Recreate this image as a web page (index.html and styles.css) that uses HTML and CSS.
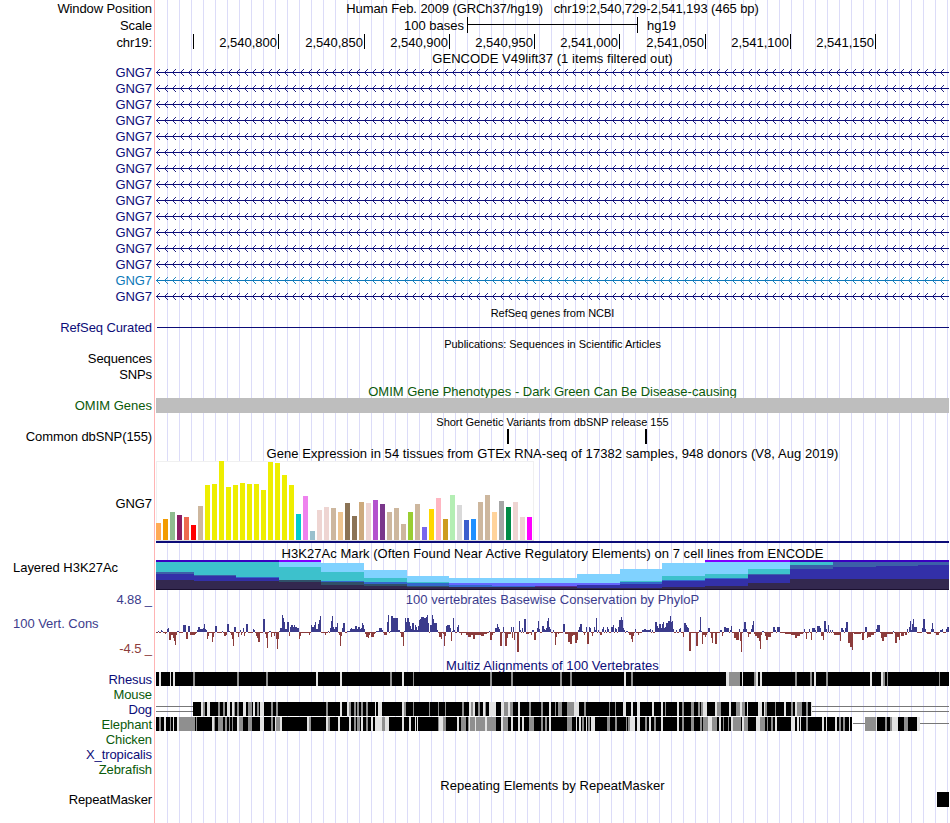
FILE: index.html
```
<!DOCTYPE html>
<html>

	<head>
		<meta charset="UTF-8">
		<title>UCSC Genome Browser</title>
		<link rel="stylesheet" href="styles.css">
	</head>

	<body>
		<div id="browser">
			<div class="row h17">
				<span class="label">Window Position</span>
				<p class="title position">Human Feb. 2009 (GRCh37/hg19) &nbsp; chr19:2,540,729-2,541,193 (465 bp)</p>
			</div>
			<div class="row h17">
				<span class="label">Scale</span>
				<div class="scale"><span>100 bases</span><i></i><span>hg19</span></div>
			</div>
			<div class="row h17">
				<span class="label">chr19:</span>
				<div class="ruler" id="ruler"></div>
			</div>
			<div class="row h14">
				<span></span>
				<p class="title">GENCODE V49lift37 (1 items filtered out)</p>
			</div>
			<div id="genes"></div>

			<div class="row h14 refseq-title">
				<span></span>
				<p class="title small">RefSeq genes from NCBI</p>
			</div>
			<div class="row h15 navy">
				<span class="label">RefSeq Curated</span>
				<svg width="793" height="15" viewBox="156 0 793 15"><rect x="157" y="7" width="792" height="1" fill="#0c0c78" /></svg>
			</div>
			<div class="row h16">
				<span></span>
				<p class="title small low">Publications: Sequences in Scientific Articles</p>
			</div>
			<div class="row h16"><span class="label">Sequences</span></div>
			<div class="row h16"><span class="label">SNPs</span></div>
			<div class="row h15 green">
				<span></span>
				<p class="title omim low">OMIM Gene Phenotypes - Dark Green Can Be Disease-causing</p>
			</div>
			<div class="row h15 green">
				<span class="label omim">OMIM Genes</span>
				<div class="omim-bar"></div>
			</div>
			<div class="row h16">
				<span></span>
				<p class="title small low">Short Genetic Variants from dbSNP release 155</p>
			</div>
			<div class="row h15">
				<span class="label">Common dbSNP(155)</span>
				<svg width="793" height="15" viewBox="156 0 793 15">
					<rect x="507" y="0" width="2" height="15" />
					<rect x="645" y="0" width="2" height="15" />
				</svg>
			</div>
			<div class="row h17">
				<span></span>
				<p class="title low">Gene Expression in 54 tissues from GTEx RNA-seq of 17382 samples, 948 donors (V8, Aug 2019)</p>
			</div>
			<div class="row h84">
				<span class="label">GNG7</span>
				<svg id="gtex" width="793" height="84" viewBox="156 461 793 84"></svg>
			</div>
			<div class="row h15">
				<span></span>
				<p class="title low">H3K27Ac Mark (Often Found Near Active Regulatory Elements) on 7 cell lines from ENCODE</p>
			</div>
			<div class="row h32">
				<span class="label left h3k-label">Layered H3K27Ac</span>
				<svg id="h3k" width="793" height="32" viewBox="156 560 793 32"></svg>
			</div>
			<div class="row h15 blue">
				<span class="label">4.88 _</span>
				<p class="title cons-title">100 vertebrates Basewise Conservation by PhyloP</p>
			</div>
			<div class="row h51 blue">
				<div class="cons-label">
					<span class="label left">100 Vert. Cons</span>
					<span class="label red">-4.5 _</span>
				</div>
				<svg id="cons" width="793" height="51" viewBox="156 607 793 51"></svg>
			</div>
			<div class="row h14 navy">
				<span></span>
				<p class="title">Multiz Alignments of 100 Vertebrates</p>
			</div>
			<div class="row h15 navy"><span class="label">Rhesus</span><svg id="rhesus" width="793" height="15" viewBox="156 0 793 15"></svg></div>
			<div class="row h15 green"><span class="label">Mouse</span></div>
			<div class="row h15 navy"><span class="label">Dog</span><svg id="dog" width="793" height="15" viewBox="156 0 793 15"></svg></div>
			<div class="row h15 green"><span class="label">Elephant</span><svg id="elephant" width="793" height="15" viewBox="156 0 793 15"></svg></div>
			<div class="row h15 green"><span class="label">Chicken</span></div>
			<div class="row h15 navy"><span class="label">X_tropicalis</span></div>
			<div class="row h15 green"><span class="label">Zebrafish</span></div>
			<div class="row h15">
				<span></span>
				<p class="title low">Repeating Elements by RepeatMasker</p>
			</div>
			<div class="row h15">
				<span class="label">RepeatMasker</span>
				<svg width="793" height="15" viewBox="156 0 793 15"><rect x="937" y="0" width="12" height="15" /></svg>
			</div>
		</div>
		<script src="tracks.js" type="text/javascript" charset="utf-8"></script>
	</body>

</html>
```
FILE: styles.css
```
* {
	margin: 0;
	padding: 0;
	box-sizing: border-box;
}

body {
	width: 949px;
	background: #fff;
	font-family: "Liberation Sans", Arial, sans-serif;
	font-size: 13px;
	color: #000;
}

#browser {
	height: 823px;
	overflow: hidden;
	background:
		linear-gradient(90deg, #fff 154px, #ffb4b4 154px, #ffb4b4 155px, #fff 155px, #fff 156px, transparent 156px),
		linear-gradient(90deg, #dcdcf8 1px, transparent 1px) 167px 0 / 12px 100%;
}

.row {
	display: grid;
	grid-template-columns: 152px 793px;
	column-gap: 4px;
	align-items: center;
	white-space: nowrap;
}

.h14 { height: 14px; }
.h15 { height: 15px; }
.h16 { height: 16px; }
.h17 { height: 17px; }
.h32 { height: 32px; }
.h51 { height: 51px; }
.h84 { height: 84px; }

.label {
	text-align: right;
	line-height: 15px;
	letter-spacing: -0.1px;
}

.h16 .label {
	align-self: start;
}

.left {
	text-align: left;
	padding-left: 13px;
	letter-spacing: -0.03px;
}

.title {
	text-align: center;
	font-weight: normal;
	line-height: 15px;
	letter-spacing: 0.05px;
}

.low {
	padding-top: 2px;
}

.h15 .low {
	padding-top: 1px;
}

.position {
	letter-spacing: -0.09px;
}

.cons-title {
	letter-spacing: 0.03px;
}

.omim {
	letter-spacing: 0;
}

.small {
	font-size: 11px;
	letter-spacing: -0.02px;
}

svg {
	display: block;
	shape-rendering: crispEdges;
}

.navy { color: #0c0c78; }
.green { color: #0a5a0a; }
.blue { color: #3c3c8c; }
.red { color: #8c3c3c; }
.alt { color: #0c78b8; }

.scale {
	display: flex;
	align-items: center;
	height: 17px;
	padding-left: 248px;
}

.scale i {
	align-self: flex-start;
	width: 171px;
	height: 16px;
	margin: 0 9px 0 3px;
	border: solid #000;
	border-width: 0 1px;
	background: linear-gradient(#000, #000) 0 7px / 100% 1px no-repeat;
}

.ruler {
	display: flex;
	align-items: flex-start;
	height: 17px;
}

.ruler span {
	height: 15px;
	line-height: 17px;
	text-align: right;
	padding-right: 1px;
	border-right: 1px solid #000;
}

.refseq-title {
	margin-top: 1px;
}

.omim-bar {
	height: 15px;
	background: #bebebe;
}

.h3k-label {
	align-self: start;
}

.cons-label {
	display: flex;
	flex-direction: column;
	justify-content: space-between;
	height: 51px;
	padding: 9px 0 2px;
}
```
FILE: tracks.js
```
var NS = "http://www.w3.org/2000/svg";

function rect(svg, x, y, w, h, fill) {
	var r = document.createElementNS(NS, "rect");
	r.setAttribute("x", x);
	r.setAttribute("y", y);
	r.setAttribute("width", w);
	r.setAttribute("height", h);
	r.setAttribute("fill", fill);
	svg.appendChild(r);
}

function get(id) {
	return document.getElementById(id);
}

// ruler ticks
var ticks = [[193, ""], [278, "2,540,800"], [364, "2,540,850"], [449, "2,540,900"], [534, "2,540,950"],
	[619, "2,541,000"], [705, "2,541,050"], [790, "2,541,100"], [875, "2,541,150"]];
var prev = 156;
ticks.forEach(function(t) {
	var s = document.createElement("span");
	s.style.width = (t[0] + 1 - prev) + "px";
	s.textContent = t[1];
	get("ruler").appendChild(s);
	prev = t[0] + 1;
});

// gene rows, all on the minus strand
var arrows = "";
for(var x = 156; x < 946; x += 8) {
	arrows += "M" + (x + 4) + " 4L" + (x + 0.5) + " 7.5L" + (x + 4) + " 11";
}
for(var i = 0; i < 15; i++) {
	var alt = i == 13;
	var color = alt ? "#0c78b8" : "#0c0c78";
	var row = document.createElement("div");
	row.className = "row h16 " + (alt ? "alt" : "navy");
	row.innerHTML = '<span class="label">GNG7</span><svg width="793" height="16" viewBox="156 0 793 16">' +
		'<rect x="156" y="7" width="793" height="1" fill="' + color + '"/>' +
		'<path shape-rendering="auto" fill="none" stroke-width="0.9" stroke="' + color + '" d="' + arrows + '"/></svg>';
	get("genes").appendChild(row);
}

// GTEx
var tan = "#cdb79e", pink = "#eed5d2", yellow = "#eeee00";
var gtex = [[17, "#ffaa55"], [21, "#f29b00"], [28, "#8fbc8f"], [25, "#8b1c62"], [23, "#ee6a50"], [15, "#ff0000"], [34, tan],
	[55, yellow], [56, yellow], [79, yellow], [53, yellow], [55, yellow], [57, yellow], [56, yellow], [56, yellow],
	[50, yellow], [78, yellow], [77, yellow], [65, yellow], [55, yellow],
	[26, "#00cdcd"], [44, "#ee82ee"], [9, "#9ac0cd"], [30, pink], [33, pink], [32, tan], [28, "#eec591"], [37, "#8b7355"],
	[24, "#8b7355"], [38, "#cdaa7d"], [37, pink], [40, "#b452cd"], [36, "#7a378b"], [28, tan], [32, tan], [16, tan],
	[28, "#9acd32"], [36, tan], [13, "#7a67ee"], [31, "#ffd700"], [42, "#ffb6c1"], [21, "#cd9b1d"], [45, "#b4eeb4"],
	[35, "#d9d9d9"], [20, "#3a5fcd"], [21, "#1e90ff"], [38, tan], [45, tan], [28, "#ffd39b"], [39, "#a6a6a6"],
	[33, "#008b45"], [38, pink], [23, pink], [23, "#ff00ff"]];
rect(get("gtex"), 156, 461, 378, 80, "#f0f0f0");
rect(get("gtex"), 157, 462, 376, 78, "#ffffff");
rect(get("gtex"), 156, 540, 378, 1, "#dcdcdc");
gtex.forEach(function(b, i) {
	rect(get("gtex"), 156 + i * 7, 540 - b[0], 5, b[0], b[1]);
});
rect(get("gtex"), 156, 541, 793, 2, "#0c0c78");

// H3K27Ac: [x, top, colour, top, colour ...], every layer runs down to the next one
var L = "#80d2ff", T = "#3dc1cc", B = "#3367cc", N = "#3330a8", D = "#33284f", S = "#3c60a8", G = "#305068",
	V = "#6666ff", P = "#3a00c0", Q = "#8000ff";
var h3k = [
	[156, 560, P, 562, T, 572, S, 574, N, 580, D],
	[194, 560, P, 562, T, 575, S, 576, N, 581, D],
	[236, 560, P, 562, T, 577, B, 578, N, 581, D],
	[279, 560, Q, 562, L, 567, T, 580, G, 582, D],
	[321, 563, L, 572, T, 581, B, 582, G, 585, D],
	[364, 570, L, 578, T, 582, B, 584, G, 586, D],
	[407, 576, L, 582, T, 583, B, 586, G, 587, D],
	[449, 578, L, 583, V, 585, B, 587, D],
	[492, 578, L, 583, V, 586, B, 587, D],
	[535, 578, L, 583, V, 586, "#5a2890", 587, D],
	[577, 574, L, 583, V, 585, N, 588, D],
	[620, 569, L, 581, T, 582, B, 584, N, 588, D],
	[662, 563, L, 576, T, 580, B, 581, N, 587, D],
	[705, 560, Q, 562, L, 574, T, 578, B, 579, N, 586, D],
	[748, 560, Q, 562, L, 569, T, 574, S, 575, N, 583, D],
	[790, 560, P, 562, T, 565, S, 569, N, 579, D],
	[833, 560, P, 562, S, 567, N, 579, D],
	[876, 560, P, 562, S, 566, N, 579, D],
	[918, 560, P, 562, S, 565, N, 579, D]
];
h3k.forEach(function(c, i) {
	var end = i + 1 < h3k.length ? h3k[i + 1][0] : 949;
	for(var k = 1; k < c.length; k += 2) {
		rect(get("h3k"), c[0], c[k], end - c[0], 590 - c[k], c[k + 1]);
	}
});
rect(get("h3k"), 156, 589, 793, 1, "#1a1030");

// PhyloP: "x value" or "x-end value", pixels above or below the axis
var cons = "158 1,161 2,162 1,165 -2,167 3,168 4,169-170 -8,171-172 -3,173 -6,174 -9,175 -13,176 -3,177 1,178 1,183-185 7,186-187 -7,188-189 6," +
	"190-194 -3,195 -2,197 2,198-199 5,200-202 3,203 4,204 8,205 3,206 2,207 -7,208 -4,212 -10,213 -5,215-216 6,222 1,224-225 -4,226 -3," +
	"227-228 8,229 1,231 -3,232 -7,233 -14,234-235 5,238 -5,240 2,241 -3,243 4,244 -4,246-247 8,253 3,254 2,256 -4,257 -6,258-259 -10," +
	"263-264 13,265 -2,266 -6,267 -16,269-270 1,271 -5,274 -4,276 -7,277 -17,278 -7,279 1,280-281 4,282 17,283 14,284 10,285-286 3,287-288 10," +
	"289 -4,290 5,291-292 7,293 5,294 7,295-296 5,297-298 4,299 -7,300 -4,309 -3,311 7,312-313 5,314 7,315 10,316-317 3,318 8,319 12,320 16," +
	"325 -3,328 1,330 4,331 11,332 16,333 5,334 3,335-336 5,337 9,339 -3,340 -14,341 -4,342 4,343-344 9,347-349 1,350 3,351 4,352-354 3," +
	"355-356 6,357 3,358-359 5,360 3,361 4,362 9,363 7,364 3,365 -2,366-367 -5,368 -6,369 -3,371-373 -5,374 -2,376-378 1,379-381 4,382 2," +
	"384-386 -3,387 10,388 17,390 1,391-392 16,393-397 14,398-399 2,401-402 -5,403 -14,404 1,405 14,406 10,407-408 14,409 10,410 6,411 3," +
	"412-413 9,414 2,415 7,416 5,417 2,418 6,419 12,420 13,421-423 15,424-425 14,426 15,427 17,428 9,430-431 7,432 17,433 13,434-436 9,437 2," +
	"439-440 -5,441 -7,443 -2,444 -14,445 -4,446 6,447-449 7,450 4,451 -9,452 1,453 14,454 2,457 5,458 7,461 -3,466-467 -3,468-470 -5," +
	"471-472 -3,473-474 -7,475-480 -3,481-483 -4,484-486 -2,489 1,490-491 -8,492 -3,495-496 4,497 8,498 5,499 3,500-501 -14,503 5," +
	"505-506 -14,507 -6,508-510 -2,511 5,512 -6,513 5,514 -8,517-518 -20,519 11,520 2,522 4,524-525 13,526-528 -2,531 -3,532-533 2," +
	"534-535 -8,537 4,538 11,539 3,542-543 6,544 3,545 2,546 4,547 11,548 14,549 5,550 3,553 2,555 -13,556 -5,558 -2,563-564 8,565-567 -2," +
	"568-569 -10,570-571 -12,572 -4,573-574 -3,575-576 -11,577 -8,578 2,579 5,580-581 8,582 1,584 -3,586 5,587-588 -12,589 5,590 4,592 -4," +
	"594 5,595 2,596 14,598 2,600-601 -3,602 3,603 5,605 2,607 5,608 3,611-612 5,613 7,615 4,616 3,618 5,619 12,620 12,621 15,622 12,623 4," +
	"624 2,626-627 1,629-630 -3,631 -7,632 -10,633 -4,635 3,638 -3,642-643 2,644-645 3,646-649 2,650 3,652 2,655-656 10,657 6,658 4," +
	"659-660 8,661 4,662 8,663 10,664 4,665 5,666-667 9,668-669 11,670 16,671 10,672 11,673 3,676 2,679 3,680 4,683 -5,684-685 9,686 7," +
	"687 5,688 4,689-690 -19,696-697 -14,699 2,700 15,701 1,702 -12,703-704 -3,705 -5,706 -3,708-709 4,711 -6,712 -11,715-716 -12,720-721 2," +
	"722 -4,724-725 5,726-728 4,730 2,731 6,734-735 -6,736-738 -8,739 3,740 -9,741 -20,743 3,744-745 10,746 3,748 -5,749-750 -2,751 3," +
	"752 7,753 11,754 -2,755-756 -4,757-758 -6,759 -9,760 -17,761 -3,762-763 1,765 -4,766-767 -8,768-770 -5,773-774 5,775 2,777-779 5," +
	"785-790 -2,791-794 -3,795-796 -6,797-799 -4,800-802 -2,804 3,806 -7,809 3,811 -8,812-814 4,815 2,817-819 6,820 4,821-822 -4,823 -8," +
	"824-825 11,826 3,828 7,830 2,832 2,834-839 -3,840 -9,841-842 4,843 2,845 4,846-847 10,848-849 -11,850-851 -15,852 -18,854-860 -2," +
	"862-863 -8,865-866 5,867 -6,868-870 -5,871-873 -3,876 3,877-879 7,881 -6,882-883 -9,884-886 -5,887-892 -2,893 1,895-896 -11," +
	"897-898 -5,899 -8,901-903 -4,905-906 -3,907 3,909 5,910 11,911 2,912 8,913 13,914-916 5,922 4,923-924 13,925 3,927-930 -2,931 3," +
	"932 9,933 3,936-938 -3,940-941 2,942 3,944 -1,946 3,947-948 5";
var vals = {};
cons.split(",").forEach(function(s) {
	var p = s.split(" "), r = p[0].split("-");
	for(var x = +r[0]; x <= +(r[1] || r[0]); x++) vals[x] = +p[1];
});
for(var x = 156; x < 949; x++) {
	var v = vals[x] || -1;
	if(v > 0) rect(get("cons"), x, 632 - v, 1, v, "#3c3c8c");
	else rect(get("cons"), x, 632, 1, -v, "#8c3c3c");
}

// alignments: black blocks with weaker columns on top, "x width shade"
function align(id, blocks, marks) {
	blocks.forEach(function(b) {
		rect(get(id), b[0], 0, b[1] - b[0], 14, "#000");
	});
	marks.split(",").forEach(function(m) {
		var p = m.split(" ");
		rect(get(id), p[0], 0, p[1], 14, p[2] == "L" ? "#e3e3e3" : "#8f8f8f");
	});
}
align("rhesus", [[156, 949]], "159 2 L,170 1 L,173 2 L,193 2 G,237 2 G,266 2 G,316 2 L,340 2 L,390 2 G,402 2 L,413 1 G,490 2 G," +
	"511 2 G,560 2 G,570 2 G,624 2 L,631 2 G,726 3 L,729 11 G,742 1 L,754 2 G,756 2 L,760 2 L,795 2 G,810 2 G,814 2 L,826 2 G,870 2 L," +
	"881 2 L,883 2 G,887 1 G,939 1 G");
rect(get("dog"), 156, 4, 793, 1, "#777");
rect(get("dog"), 156, 9, 793, 1, "#777");
align("dog", [[193, 811]], "201 2 L,203 2 G,207 3 L,218 2 G,223 2 G,227 3 L,232 2 L,234 1 G,237 2 G,243 3 L,248 4 G,253 2 L,257 2 G," +
	"260 4 L,271 2 G,276 2 G,326 2 G,340 2 L,347 2 L,349 2 G,354 2 G,357 2 G,361 2 G,366 2 G,375 1 L,378 4 L,402 2 L,404 2 G,413 1 G," +
	"429 1 G,438 1 G,445 1 G,462 2 G,469 2 L,471 2 G,473 2 L,478 2 G,483 2 L,485 1 G,489 7 L,501 3 L,504 4 G,508 2 L,510 3 G,518 2 L," +
	"529 2 G,541 2 G,549 2 L,555 1 G,558 4 G,567 7 G,574 5 L,584 2 G,609 1 G,615 1 G,623 3 L,631 2 L,637 3 L,652 2 L,661 2 L,665 1 G," +
	"677 2 L,682 2 G,691 3 G,698 2 G,701 2 G,703 4 L,715 2 L,717 4 G,729 2 L,736 4 G,740 2 L,742 3 G,747 1 L,758 4 L,764 1 L,765 2 G," +
	"775 1 G,784 2 L,791 2 G,795 2 L,797 5 G,806 2 G,811 1 L");
rect(get("elephant"), 853, 6, 12, 1, "#777");
rect(get("elephant"), 920, 6, 29, 1, "#777");
align("elephant", [[156, 852], [865, 917]], "159 2 G,164 2 L,170 1 G,173 1 L,177 2 L,179 16 G,196 1 G,212 2 L,214 1 G,218 5 G,225 2 G," +
	"229 1 G,232 1 G,237 2 L,239 4 G,248 4 G,260 4 L,271 2 G,275 1 L,276 4 G,280 2 L,307 2 L,309 2 G,326 2 L,328 2 G,338 2 L,349 2 L," +
	"354 2 G,357 3 G,361 2 L,366 2 G,371 2 L,375 7 L,382 3 G,385 4 L,402 2 L,409 2 L,415 1 L,417 1 L,438 1 G,439 4 L,443 3 G,457 2 L," +
	"461 5 G,468 1 G,469 1 L,470 5 G,475 1 L,476 9 G,485 2 L,487 9 G,501 2 L,503 5 G,511 2 L,518 2 L,522 2 L,529 5 G,541 2 G,545 2 G," +
	"549 2 L,567 5 G,576 1 L,579 2 L,582 2 G,586 1 L,588 2 G,591 4 L,607 3 G,615 2 G,626 1 G,628 2 G,630 5 L,637 3 L,645 2 G,649 2 L," +
	"654 2 G,661 2 L,677 2 L,682 2 G,691 3 G,700 2 G,703 5 G,708 4 L,712 5 G,719 2 L,723 1 G,728 1 G,731 2 L,733 8 G,742 2 L,744 4 G," +
	"756 4 L,760 5 G,767 1 G,771 2 G,775 2 L,791 4 L,797 2 L,800 1 L,806 2 G,822 2 L,826 1 L,835 2 L,839 2 G,843 2 G,849 1 L," +
	"865 11 G,876 1 L,885 2 G,890 2 G,892 6 L,904 4 G,917 3 L");
```
